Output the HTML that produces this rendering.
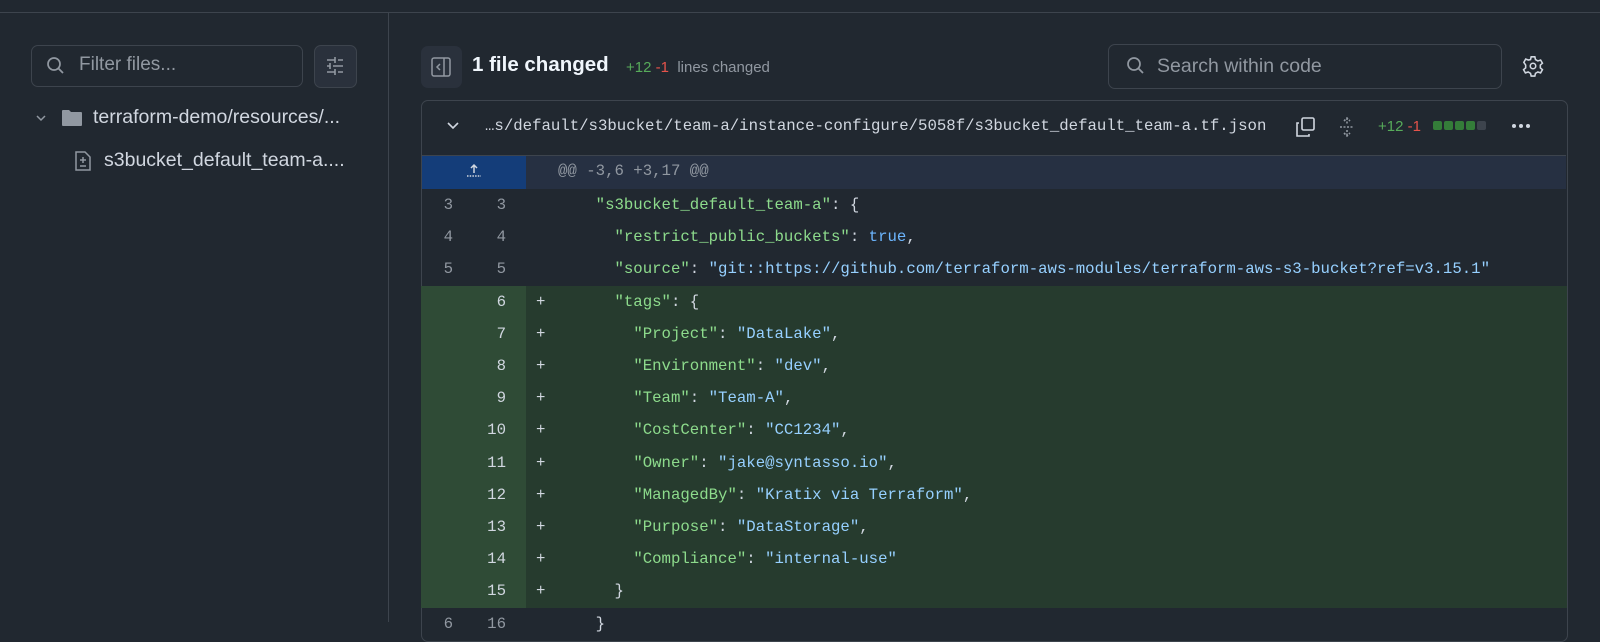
<html><head><style>
body{margin:0;width:1600px;height:622px;background:#212830;font-family:"Liberation Sans",sans-serif;color:#d1d7e0;overflow:hidden;position:relative}
.a{position:absolute}
.mono{font-family:"Liberation Mono",monospace;font-size:15.7px}
.row{position:absolute;left:421px;width:1146px;height:32.2px;line-height:32.2px}
.on{position:absolute;left:0;width:32px;text-align:right;color:#9198a1}
.nn{position:absolute;left:50px;width:35px;text-align:right;color:#9198a1}
.add{background:#263b2e}
.add .num{position:absolute;left:0;width:105px;height:100%;background:#2f4b36}
.add .on,.add .nn{color:#d1d7e0}
.pl{position:absolute;left:115px;color:#d1d7e0}
.c{position:absolute;left:137px;white-space:pre;color:#d1d7e0}
.k{color:#8ddb8c}.s{color:#96d0ff}.b{color:#6cb6ff}
.dot{width:4px;height:4px;border-radius:50%;background:#d1d7e0;display:inline-block;margin-right:3px}
</style></head><body>
<div class="a" style="left:0;top:12px;width:1600px;height:1px;background:#3d444d"></div>
<div class="a" style="left:388px;top:12px;width:1px;height:610px;background:#3d444d"></div>
<!-- sidebar -->
<div class="a" style="left:31px;top:45px;width:270px;height:40px;border:1px solid #3d444d;border-radius:7px"></div>
<svg class="a" style="left:46px;top:56px" width="20" height="20" viewBox="0 0 20 20"><circle cx="8" cy="8" r="6" fill="none" stroke="#9198a1" stroke-width="1.7"/><path d="M12.5 12.5L17 17" stroke="#9198a1" stroke-width="1.8"/></svg>
<div class="a" style="left:79px;top:54px;font-size:19px;color:#9198a1">Filter files...</div>
<div class="a" style="left:314px;top:45px;width:41px;height:41px;background:#2a313c;border:1px solid #3d444d;border-radius:7px"></div>
<svg class="a" style="left:324px;top:55px" width="22" height="22" viewBox="0 0 22 22" stroke="#9198a1" stroke-width="1.6"><path d="M3 5h8M14 5h5M11 2v6M3 11h3M9 11h10M6 8v6M3 17h8M14 17h5M11 14v6"/></svg>
<svg class="a" style="left:35px;top:112px" width="12" height="12" viewBox="0 0 12 12"><path d="M2 4l4 4 4-4" fill="none" stroke="#9198a1" stroke-width="1.5"/></svg>
<svg class="a" style="left:61px;top:108px" width="22" height="20" viewBox="0 0 22 20"><path d="M1 3a1 1 0 0 1 1-1h6l2 2h10a1 1 0 0 1 1 1v12a1 1 0 0 1-1 1H2a1 1 0 0 1-1-1z" fill="#9198a1"/></svg>
<div class="a" style="left:93px;top:106px;font-size:19.5px;color:#d1d7e0">terraform-demo/resources/...</div>
<svg class="a" style="left:74px;top:150px" width="18" height="22" viewBox="0 0 18 22" fill="none" stroke="#9198a1" stroke-width="1.5"><path d="M2 2h9l5 5v13H2z"/><path d="M9 7v6M6 10h6M6 16h6"/></svg>
<div class="a" style="left:104px;top:149px;font-size:19.5px;color:#d1d7e0">s3bucket_default_team-a....</div>
<!-- header -->
<div class="a" style="left:421px;top:46px;width:41px;height:42px;background:#2a313c;border-radius:7px"></div>
<svg class="a" style="left:430px;top:56px" width="22" height="22" viewBox="0 0 22 22" fill="none" stroke="#9198a1" stroke-width="1.5"><rect x="2" y="2" width="18" height="18" rx="2"/><path d="M14 2v18M10 8l-3 3 3 3"/></svg>
<div class="a" style="left:472px;top:53px;font-size:20.5px;font-weight:bold;color:#f0f6fc">1 file changed</div>
<div class="a" style="left:626px;top:59px;font-size:15px"><span style="color:#57ab5a">+12</span> <span style="color:#e5534b">-1</span> &nbsp;<span style="color:#9198a1">lines changed</span></div>
<div class="a" style="left:1108px;top:44px;width:392px;height:43px;border:1px solid #3d444d;border-radius:7px"></div>
<svg class="a" style="left:1126px;top:56px" width="20" height="20" viewBox="0 0 20 20"><circle cx="8" cy="8" r="6" fill="none" stroke="#9198a1" stroke-width="1.7"/><path d="M12.5 12.5L17 17" stroke="#9198a1" stroke-width="1.8"/></svg>
<div class="a" style="left:1157px;top:55px;font-size:19.5px;color:#9198a1">Search within code</div>
<svg class="a" style="left:1522px;top:55px" width="22" height="22" viewBox="0 0 24 24" fill="none" stroke="#d1d7e0" stroke-width="1.7"><circle cx="12" cy="12" r="3"/><path d="M10 2h4l.7 3 2.6 1.5 3-1 2 3.5-2.3 2v3l2.3 2-2 3.5-3-1-2.6 1.5-.7 3h-4l-.7-3-2.6-1.5-3 1-2-3.5 2.3-2v-3L2 8l2-3.5 3 1L9.3 5z"/></svg>
<!-- diff box -->
<div class="a" style="left:421px;top:100px;width:1145px;height:540px;border:1px solid #3d444d;border-radius:7px"></div>
<div class="a" style="left:422px;top:155px;width:1144px;height:1px;background:#3d444d"></div>
<svg class="a" style="left:446px;top:120px" width="14" height="12" viewBox="0 0 14 12"><path d="M2 3l5 5 5-5" fill="none" stroke="#d1d7e0" stroke-width="1.6"/></svg>
<div class="a mono" style="left:485px;top:117px;color:#d1d7e0">…s/default/s3bucket/team-a/instance-configure/5058f/s3bucket_default_team-a.tf.json</div>
<svg class="a" style="left:1294px;top:116px" width="22" height="22" viewBox="0 0 22 22" fill="none" stroke="#d1d7e0" stroke-width="1.6"><rect x="8" y="2" width="12" height="12" rx="1.5"/><path d="M5 7H3v13h12v-2"/></svg>
<svg class="a" style="left:1338px;top:116px" width="18" height="22" viewBox="0 0 18 22" fill="none" stroke="#9198a1" stroke-width="1.6"><path d="M9 2v6M6 5l3-3 3 3M9 14v6M6 17l3 3 3-3M2 11h14" stroke-dasharray="2 1.5"/></svg>
<div class="a" style="left:1378px;top:118px;font-size:15px"><span style="color:#57ab5a">+12</span> <span style="color:#e5534b">-1</span></div>
<div class="a" style="left:1433px;top:121px;display:flex;gap:2px"><i style="width:9px;height:9px;background:#347d39;border-radius:2px"></i><i style="width:9px;height:9px;background:#347d39;border-radius:2px"></i><i style="width:9px;height:9px;background:#347d39;border-radius:2px"></i><i style="width:9px;height:9px;background:#347d39;border-radius:2px"></i><i style="width:9px;height:9px;background:#3d444d;border-radius:2px"></i></div>
<div class="a" style="left:1512px;top:124px;line-height:0"><i class="dot"></i><i class="dot"></i><i class="dot"></i></div>
<!-- hunk -->
<div class="a" style="left:422px;top:156px;width:1144px;height:33px;background:#263042"></div>
<div class="a" style="left:422px;top:156px;width:104px;height:33px;background:#143d79"></div>
<svg class="a" style="left:464px;top:161px" width="20" height="20" viewBox="0 0 20 20"><path d="M10 4v8M7 7l3-3 3 3" fill="none" stroke="#d1d7e0" stroke-width="1.5"/><path d="M3 15h14" stroke="#d1d7e0" stroke-width="1.5" stroke-dasharray="1.5 1.2"/></svg>
<div class="a mono" style="left:558px;top:162px;color:#9198a1">@@ -3,6 +3,17 @@</div>
<div class="mono">
<div class="row" style="top:189px"><span class="on">3</span><span class="nn">3</span><span class="c">    <span class="k">"s3bucket_default_team-a"</span>: {</span></div>
<div class="row" style="top:221.2px"><span class="on">4</span><span class="nn">4</span><span class="c">      <span class="k">"restrict_public_buckets"</span>: <span class="b">true</span>,</span></div>
<div class="row" style="top:253.4px"><span class="on">5</span><span class="nn">5</span><span class="c">      <span class="k">"source"</span>: <span class="s">"git::https://github.com/terraform-aws-modules/terraform-aws-s3-bucket?ref=v3.15.1"</span></span></div>
<div class="row add" style="top:285.6px"><i class="num"></i><span class="nn">6</span><span class="pl">+</span><span class="c">      <span class="k">"tags"</span>: {</span></div>
<div class="row add" style="top:317.8px"><i class="num"></i><span class="nn">7</span><span class="pl">+</span><span class="c">        <span class="k">"Project"</span>: <span class="s">"DataLake"</span>,</span></div>
<div class="row add" style="top:350px"><i class="num"></i><span class="nn">8</span><span class="pl">+</span><span class="c">        <span class="k">"Environment"</span>: <span class="s">"dev"</span>,</span></div>
<div class="row add" style="top:382.2px"><i class="num"></i><span class="nn">9</span><span class="pl">+</span><span class="c">        <span class="k">"Team"</span>: <span class="s">"Team-A"</span>,</span></div>
<div class="row add" style="top:414.4px"><i class="num"></i><span class="nn">10</span><span class="pl">+</span><span class="c">        <span class="k">"CostCenter"</span>: <span class="s">"CC1234"</span>,</span></div>
<div class="row add" style="top:446.6px"><i class="num"></i><span class="nn">11</span><span class="pl">+</span><span class="c">        <span class="k">"Owner"</span>: <span class="s">"jake@syntasso.io"</span>,</span></div>
<div class="row add" style="top:478.8px"><i class="num"></i><span class="nn">12</span><span class="pl">+</span><span class="c">        <span class="k">"ManagedBy"</span>: <span class="s">"Kratix via Terraform"</span>,</span></div>
<div class="row add" style="top:511px"><i class="num"></i><span class="nn">13</span><span class="pl">+</span><span class="c">        <span class="k">"Purpose"</span>: <span class="s">"DataStorage"</span>,</span></div>
<div class="row add" style="top:543.2px"><i class="num"></i><span class="nn">14</span><span class="pl">+</span><span class="c">        <span class="k">"Compliance"</span>: <span class="s">"internal-use"</span></span></div>
<div class="row add" style="top:575.4px"><i class="num"></i><span class="nn">15</span><span class="pl">+</span><span class="c">      }</span></div>
<div class="row" style="top:607.6px"><span class="on">6</span><span class="nn">16</span><span class="c">    }</span></div>
</div>
</body></html>
